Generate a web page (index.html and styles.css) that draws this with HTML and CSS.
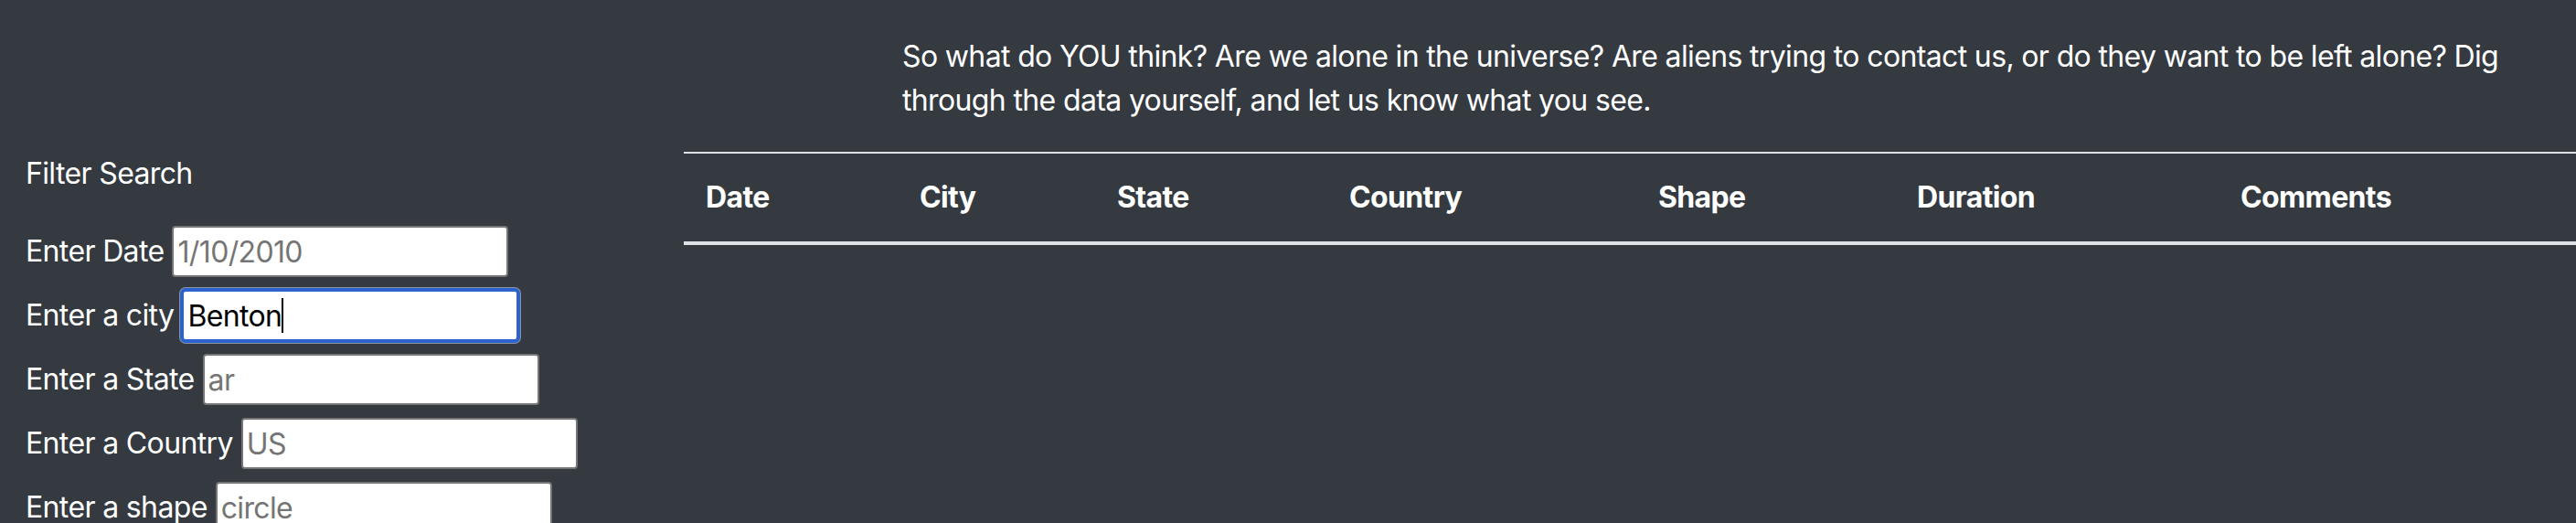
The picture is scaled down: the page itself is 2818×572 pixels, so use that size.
FILE: index.html
```html
<!DOCTYPE html>
<html lang="en">
<head>
<meta charset="utf-8">
<title>UFO Sightings</title>
<link rel="stylesheet" href="styles.css">
</head>
<body>
<div class="page">
  <section class="intro">
    <p class="intro-text">So what do YOU think? Are we alone in the universe? Are aliens trying to contact us, or do they want to be left alone? Dig through the data yourself, and let us know what you see.</p>
  </section>
  <div class="content">
    <aside class="filters">
      <div class="filters-title">Filter Search</div>
      <ul class="filter-list">
        <li class="filter-row">
          <label class="filter-label" for="datetime">Enter Date</label>
          <input class="filter-input" id="datetime" type="text" placeholder="1/10/2010">
        </li>
        <li class="filter-row">
          <label class="filter-label" for="city">Enter a city</label>
          <span class="input-wrap">
            <input class="filter-input is-focused" id="city" type="text" value="Benton">
            <span class="caret-layer" aria-hidden="true"><span class="caret-mirror">Benton</span><span class="caret"></span></span>
          </span>
        </li>
        <li class="filter-row">
          <label class="filter-label" for="state">Enter a State</label>
          <input class="filter-input" id="state" type="text" placeholder="ar">
        </li>
        <li class="filter-row">
          <label class="filter-label" for="country">Enter a Country</label>
          <input class="filter-input" id="country" type="text" placeholder="US">
        </li>
        <li class="filter-row">
          <label class="filter-label" for="shape">Enter a shape</label>
          <input class="filter-input" id="shape" type="text" placeholder="circle">
        </li>
      </ul>
    </aside>
    <div class="results">
      <table class="ufo-table">
        <colgroup>
          <col class="col-date">
          <col class="col-city">
          <col class="col-state">
          <col class="col-country">
          <col class="col-shape">
          <col class="col-duration">
          <col class="col-comments">
        </colgroup>
        <thead>
          <tr>
            <th>Date</th>
            <th>City</th>
            <th>State</th>
            <th>Country</th>
            <th>Shape</th>
            <th>Duration</th>
            <th>Comments</th>
          </tr>
        </thead>
        <tbody></tbody>
      </table>
    </div>
  </div>
</div>
</body>
</html>
```
FILE: styles.css
```css
html, body {
  margin: 0;
  padding: 0;
}

body {
  background: #343a40;
  color: #ffffff;
  font-family: "Inter", "Liberation Sans", sans-serif;
  font-size: 32px;
  line-height: 48px;
  letter-spacing: -0.02em;
}

.page {
  display: flex;
  flex-direction: column;
}

.intro {
  padding: 38px 0 0 987px;
}

.intro-text {
  margin: 0 0 32px;
  max-width: 1800px;
}

.content {
  display: grid;
  grid-template-columns: 748px 1fr;
}

.filters {
  padding-left: 28px;
}

.filters-title {
  margin-bottom: 33px;
}

.filter-list {
  list-style: none;
  margin: 0;
  padding: 0;
  display: flex;
  flex-direction: column;
  gap: 14px;
}

.filter-row {
  display: flex;
  align-items: center;
  gap: 9px;
  height: 56px;
}

.filter-label {
  white-space: nowrap;
}

.input-wrap {
  position: relative;
  display: block;
}

.filter-input {
  box-sizing: border-box;
  display: block;
  width: 368px;
  height: 56px;
  margin: 0;
  padding: 2px 4px;
  border: 2px solid #767676;
  border-radius: 4px;
  background: #ffffff;
  color: #000000;
  font-family: "Inter", "Liberation Sans", sans-serif;
  font-size: 32px;
  line-height: 48px;
  letter-spacing: -0.02em;
  outline: none;
}

.filter-input::placeholder {
  color: #757575;
  opacity: 1;
}

.filter-input.is-focused {
  border-color: #2c63cf;
  box-shadow: 0 0 0 2px #2c63cf, 0 0 0 3px rgba(205, 220, 245, 0.55);
}

.caret-layer {
  position: absolute;
  left: 6px;
  top: 4px;
  display: flex;
  align-items: center;
  height: 48px;
  pointer-events: none;
}

.caret-mirror {
  visibility: hidden;
  white-space: pre;
}

.caret {
  display: block;
  width: 2px;
  height: 38px;
  background: #000000;
}

.results {
  min-width: 0;
}

.ufo-table {
  width: 100%;
  border-collapse: collapse;
  table-layout: fixed;
  color: #ffffff;
}

.col-date { width: 234px; }
.col-city { width: 216px; }
.col-state { width: 254px; }
.col-country { width: 338px; }
.col-shape { width: 283px; }
.col-duration { width: 354px; }

.ufo-table th {
  padding: 24px;
  text-align: left;
  vertical-align: bottom;
  font-weight: 700;
  border-top: 2px solid #dee2e6;
  border-bottom: 4px solid #dee2e6;
  white-space: nowrap;
}
```
